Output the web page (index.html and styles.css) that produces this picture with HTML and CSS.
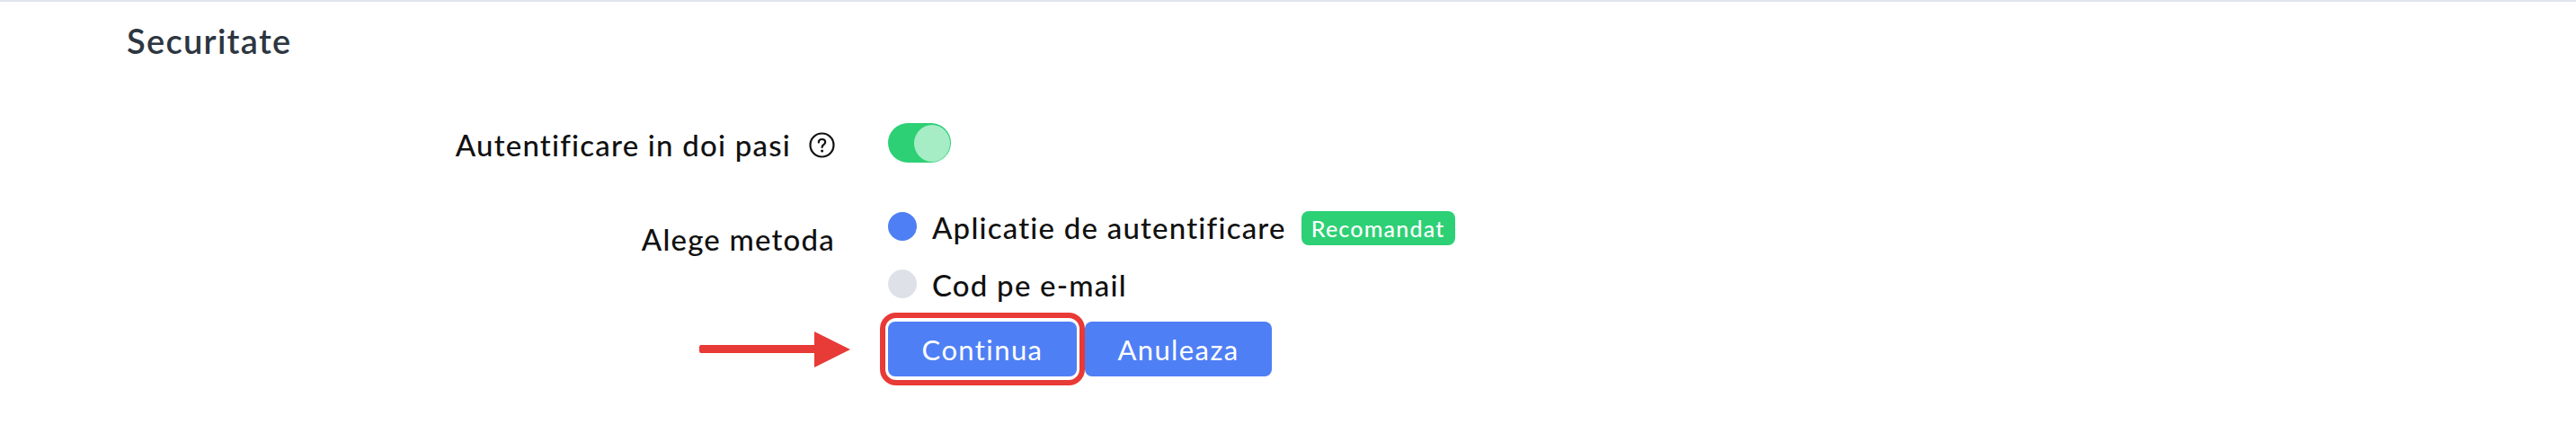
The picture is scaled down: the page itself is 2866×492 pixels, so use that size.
FILE: index.html
```html
<!DOCTYPE html>
<html lang="en">
  <head>
    <meta charset="UTF-8" />
    <title>Securitate</title>
    <link rel="stylesheet" href="styles.css">
  </head>
  <body>
    <div class="section">
      <h2 class="title">Securitate</h2>
      <div class="row row-toggle">
        <div class="label">
          Autentificare in doi pasi
          <svg class="help" viewBox="0 0 29 29" width="29" height="29">
            <circle cx="14.5" cy="14.5" r="13" fill="none" stroke="#111" stroke-width="2.2" />
            <path d="M10.8 11.6c0-2.2 1.6-3.6 3.7-3.6s3.7 1.3 3.7 3.3c0 1.5-.8 2.3-2 3-1.1.7-1.6 1.3-1.6 2.7" fill="none" stroke="#111" stroke-width="2.2" stroke-linecap="round" />
            <circle cx="14.6" cy="21" r="1.5" fill="#111" />
          </svg>
        </div>
        <div class="toggle"><span class="knob"></span></div>
      </div>
      <div class="row row-method">
        <div class="label label-method">Alege metoda</div>
        <div class="options">
          <div class="option option-first">
            <span class="radio radio-on"></span>
            <span class="option-text">Aplicatie de autentificare</span>
            <span class="badge">Recomandat</span>
          </div>
          <div class="option">
            <span class="radio"></span>
            <span class="option-text">Cod pe e-mail</span>
          </div>
          <div class="buttons">
            <div class="btn-wrap">
              <button class="btn btn-continue">Continua</button>
              <span class="highlight"></span>
              <svg class="arrow" viewBox="0 0 168 40" width="168" height="40">
                <rect x="0" y="15" width="130" height="9" rx="2" fill="#e83a36" />
                <polygon points="128,0 168,20 128,40" fill="#e83a36" />
              </svg>
            </div>
            <button class="btn btn-cancel">Anuleaza</button>
          </div>
        </div>
      </div>
    </div>
  </body>
</html>
```

FILE: styles.css
```css
* {
  margin: 0;
  padding: 0;
  box-sizing: border-box;
}
body {
  background-color: #fff;
  font-family: "Lato", "Liberation Sans", sans-serif;
  color: #111;
}
.section {
  height: 492px;
  border-top: 2px solid #dfe6ee;
  padding-left: 141px;
}
.title {
  padding-top: 21px;
  font-size: 38px;
  line-height: 44px;
  font-weight: 600;
  color: #2d3640;
  letter-spacing: 1.3px;
}
.row {
  display: flex;
}
.row-toggle {
  margin-top: 70px;
  align-items: center;
}
.label {
  display: flex;
  align-items: center;
  justify-content: flex-end;
  gap: 20px;
  width: 788px;
  height: 44px;
  margin-right: 59px;
  padding-top: 5px;
  font-size: 33px;
  line-height: 39px;
  font-weight: 500;
  letter-spacing: 1.2px;
}
.toggle {
  display: flex;
  justify-content: flex-end;
  align-items: center;
  width: 70px;
  height: 44px;
  padding-right: 1px;
  border-radius: 22px;
  background-color: #2dd075;
}
.knob {
  display: block;
  width: 40px;
  height: 41px;
  border-radius: 50%;
  background-color: #a6edc6;
}
.row-method {
  margin-top: 54px;
}
.label-method {
  padding-top: 9px;
  height: 53px;
  align-self: flex-start;
}
.option {
  display: flex;
  align-items: flex-start;
  height: 38px;
}
.option-first {
  margin-bottom: 26px;
}
.radio {
  width: 32px;
  height: 32px;
  margin-top: 1px;
  margin-right: 17px;
  border-radius: 50%;
  background-color: #dee2e8;
}
.radio-on {
  background-color: #4f7ff5;
}
.option-text {
  font-size: 33px;
  line-height: 36px;
  font-weight: 500;
  letter-spacing: 1.2px;
}
.badge {
  margin-left: 17px;
  width: 171px;
  height: 38px;
  border-radius: 8px;
  background-color: #2dd075;
  color: #fff;
  font-size: 25px;
  line-height: 38px;
  font-weight: 500;
  letter-spacing: 1.2px;
  text-align: center;
}
.buttons {
  display: flex;
  gap: 9px;
  margin-top: 21px;
}
.btn-wrap {
  position: relative;
  display: flex;
}
.btn {
  height: 61px;
  border: 0;
  border-radius: 8px;
  background-color: #4f7ff5;
  color: #fff;
  font-family: inherit;
  font-size: 31px;
  letter-spacing: 1.4px;
}
.btn-continue {
  width: 210px;
}
.btn-cancel {
  width: 208px;
}
.highlight {
  position: absolute;
  left: -9px;
  top: -10px;
  width: 228px;
  height: 81px;
  border: 6px solid #e83a36;
  border-radius: 18px;
}
.arrow {
  position: absolute;
  left: -210px;
  top: 11px;
}
```
